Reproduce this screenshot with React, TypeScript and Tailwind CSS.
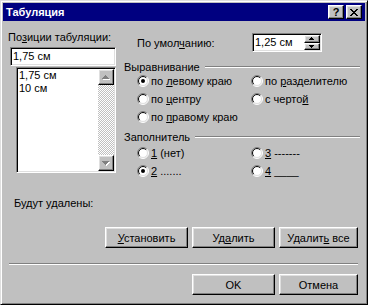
import React from 'react';

const raised =
  'border border-t-white border-l-white border-b-black border-r-black shadow-[inset_-1px_-1px_0_#808080,inset_1px_1px_0_#dfdfdf] bg-[#c0c0c0]';
const sunken =
  'border border-t-[#808080] border-l-[#808080] border-b-white border-r-white shadow-[inset_1px_1px_0_#000,inset_-1px_-1px_0_#dfdfdf] bg-white p-[1px]';

// pixel triangle, rows widen by 2 each step
const Tri = ({ up, rows, color, shadow }: { up: boolean; rows: number; color: string; shadow?: boolean }) => {
  const w = rows * 2 - 1;
  const rects = [];
  for (let i = 0; i < rows; i++) {
    const y = up ? i : rows - 1 - i;
    rects.push({ x: rows - 1 - i, y, w: i * 2 + 1 });
  }
  return (
    <svg width={w + 1} height={rows + 1} shapeRendering="crispEdges">
      {shadow && rects.map((r, i) => <rect key={'s' + i} x={r.x + 1} y={r.y + 1} width={r.w} height={1} fill="#fff" />)}
      {rects.map((r, i) => (
        <rect key={i} x={r.x} y={r.y} width={r.w} height={1} fill={color} />
      ))}
    </svg>
  );
};

const Radio = ({ checked = false }: { checked?: boolean }) => {
  const arc = (r: number, tl: boolean) => {
    const d = r * Math.SQRT1_2;
    return tl
      ? `M${6 - d} ${6 + d}A${r} ${r} 0 0 1 ${6 + d} ${6 - d}`
      : `M${6 + d} ${6 - d}A${r} ${r} 0 0 1 ${6 - d} ${6 + d}`;
  };
  return (
    <svg width="12" height="12" viewBox="0 0 12 12" className="shrink-0">
      <circle cx="6" cy="6" r="5" fill="#fff" />
      <path d={arc(5.5, true)} stroke="#808080" fill="none" />
      <path d={arc(4.5, true)} stroke="#000" fill="none" />
      <path d={arc(5.5, false)} stroke="#fff" fill="none" />
      <path d={arc(4.5, false)} stroke="#dfdfdf" fill="none" />
      {checked && <circle cx="6" cy="6" r="2" fill="#000" />}
    </svg>
  );
};

const RadioRow = ({ checked, children }: { checked?: boolean; children: React.ReactNode }) => (
  <div className="flex items-center h-[14px] gap-[2px] whitespace-nowrap">
    <Radio checked={checked} />
    <span className="leading-[14px]">{children}</span>
  </div>
);

const GroupTitle = ({ children }: { children: React.ReactNode }) => (
  <div className="flex items-center h-[14px]">
    <span className="leading-[14px] whitespace-nowrap">{children}</span>
    <div className="ml-[5px] flex-1 border-t border-t-[#808080] border-b border-b-white" />
  </div>
);

const Btn = ({ w, children }: { w: string; children: React.ReactNode }) => (
  <div className={`${w} h-[21px] ${raised} flex items-center justify-center`}>
    <span className="leading-[14px] whitespace-nowrap">{children}</span>
  </div>
);

const CloseGlyph = () => {
  const px = [
    [0, 0], [1, 0], [6, 0], [7, 0],
    [1, 1], [2, 1], [5, 1], [6, 1],
    [2, 2], [3, 2], [4, 2], [5, 2],
    [3, 3], [4, 3],
    [2, 4], [3, 4], [4, 4], [5, 4],
    [1, 5], [2, 5], [5, 5], [6, 5],
    [0, 6], [1, 6], [6, 6], [7, 6],
  ];
  return (
    <svg width="8" height="7" shapeRendering="crispEdges">
      {px.map(([x, y], i) => (
        <rect key={i} x={x} y={y} width={1} height={1} fill="#000" />
      ))}
    </svg>
  );
};

export default function App() {
  return (
    <div className="w-[368px] h-[305px] bg-[#c0c0c0] border border-t-[#dfdfdf] border-l-[#dfdfdf] border-b-black border-r-black shadow-[inset_1px_1px_0_#fff,inset_-1px_-1px_0_#808080] p-[2px] text-[11px] text-black font-['Liberation_Sans',Arial,sans-serif] overflow-hidden">
      {/* title bar */}
      <div className="h-[18px] bg-[#000080] flex items-center pl-[3px] pr-[3px]">
        <span className="text-white font-bold text-[11px] leading-[18px] flex-1">Табуляция</span>
        <div className={`w-[16px] h-[14px] ${raised} flex items-center justify-center font-bold text-[11px] leading-[12px]`}>?</div>
        <div className={`ml-[2px] w-[16px] h-[14px] ${raised} flex items-center justify-center`}>
          <CloseGlyph />
        </div>
      </div>

      <div className="flex flex-col">
        <div className="flex">
          {/* left column */}
          <div className="ml-[5px] w-[108px] flex flex-col">
            <div className="mt-[9px] h-[14px] leading-[14px] whitespace-nowrap">
              По<u>з</u>иции табуляции:
            </div>
            <div className={`mt-[3px] ml-[2px] w-[106px] h-[19px] ${sunken} flex items-center pl-[2px]`}>
              <span className="leading-[13px]">1,75 см</span>
            </div>
            <div className={`mt-[1px] ml-[8px] w-[100px] h-[106px] ${sunken} flex`}>
              <div className="flex-1 pl-[1px] flex flex-col">
                <div className="h-[13px] leading-[13px]">1,75 см</div>
                <div className="h-[13px] leading-[13px]">10 см</div>
              </div>
              <div className="w-[16px] flex flex-col bg-[repeating-conic-gradient(#fff_0_25%,#c0c0c0_0_50%)] bg-[length:2px_2px]">
                <div className={`h-[16px] ${raised} flex items-center justify-center`}>
                  <Tri up rows={4} color="#808080" shadow />
                </div>
                <div className="flex-1" />
                <div className={`h-[16px] ${raised} flex items-center justify-center`}>
                  <Tri up={false} rows={4} color="#808080" shadow />
                </div>
              </div>
            </div>
            <div className="mt-[23px] ml-[6px] h-[14px] leading-[14px] whitespace-nowrap">Будут удалены:</div>
          </div>

          {/* right column */}
          <div className="ml-[8px] flex-1 pr-[5px] flex flex-col">
            <div className="mt-[12px] flex items-center h-[19px]">
              <span className="ml-[13px] w-[115px] leading-[14px] whitespace-nowrap">
                По умол<u>ч</u>анию:
              </span>
              <div className={`w-[70px] h-[19px] ${sunken} flex`}>
                <span className="flex-1 pl-[1px] leading-[15px]">1,25 см</span>
                <div className="w-[16px] flex flex-col">
                  <div className={`h-[8px] ${raised} flex items-center justify-center`}>
                    <Tri up rows={3} color="#000" />
                  </div>
                  <div className={`h-[7px] ${raised} flex items-center justify-center`}>
                    <Tri up={false} rows={3} color="#000" />
                  </div>
                </div>
              </div>
            </div>

            <div className="mt-[8px]">
              <GroupTitle>Выравнивание</GroupTitle>
            </div>
            <div className="ml-[13px] grid grid-cols-[114px_1fr] gap-y-[4px]">
              <RadioRow checked>
                по <u>л</u>евому краю
              </RadioRow>
              <RadioRow>
                по <u>р</u>азделителю
              </RadioRow>
              <RadioRow>
                по <u>ц</u>ентру
              </RadioRow>
              <RadioRow>
                с черто<u>й</u>
              </RadioRow>
              <RadioRow>
                по <u>п</u>равому краю
              </RadioRow>
            </div>

            <div className="mt-[6px]">
              <GroupTitle>Заполнитель</GroupTitle>
            </div>
            <div className="mt-[2px] ml-[13px] grid grid-cols-[114px_1fr] gap-y-[4px]">
              <RadioRow>
                <u>1</u> (нет)
              </RadioRow>
              <RadioRow>
                <u>3</u> -------
              </RadioRow>
              <RadioRow checked>
                <u>2</u> .......
              </RadioRow>
              <RadioRow>
                <u>4</u> ____
              </RadioRow>
            </div>
          </div>
        </div>

        {/* action buttons */}
        <div className="mt-[17px] flex justify-end gap-[4px] pr-[7px]">
          <Btn w="w-[83px]">
            <u>У</u>становить
          </Btn>
          <Btn w="w-[83px]">
            Уд<u>а</u>лить
          </Btn>
          <Btn w="w-[79px]">
            Удалит<u>ь</u> все
          </Btn>
        </div>

        <div className="mt-[15px] ml-[6px] mr-[7px] border-t border-t-[#808080] border-b border-b-white" />

        <div className="mt-[9px] flex justify-end gap-[4px] pr-[7px]">
          <Btn w="w-[83px]">OK</Btn>
          <Btn w="w-[79px]">Отмена</Btn>
        </div>
      </div>
    </div>
  );
}
